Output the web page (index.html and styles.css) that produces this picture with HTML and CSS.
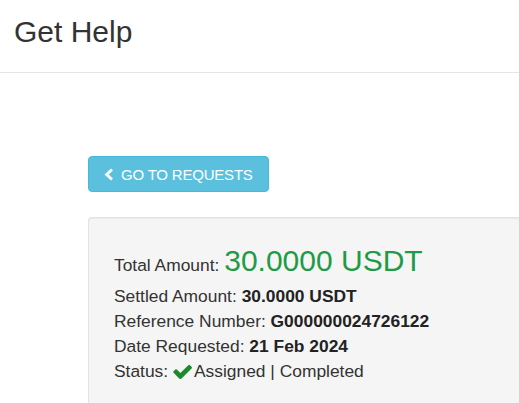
FILE: index.html
```html
<!DOCTYPE html>
<html lang="en">
<head>
<meta charset="utf-8">
<title>Get Help</title>
<link rel="stylesheet" href="styles.css">
</head>
<body>
<header class="page-header">
  <h1 class="page-title">Get Help</h1>
</header>
<main class="content">
  <a class="btn-back" href="#">
    <svg class="chevron" width="10" height="13" viewBox="0 0 10 13"><polyline points="8,1.5 2.6,6.5 8,11.5" fill="none" stroke="#fff" stroke-width="2.9" stroke-linecap="butt" stroke-linejoin="miter"/></svg>
    <span>GO TO REQUESTS</span>
  </a>
  <section class="well">
    <div class="row row-total">Total Amount: <span class="total-value">30.0000 USDT</span></div>
    <div class="row">Settled Amount: <b>30.0000 USDT</b></div>
    <div class="row">Reference Number: <b>G000000024726122</b></div>
    <div class="row">Date Requested: <b>21 Feb 2024</b></div>
    <div class="row">Status: <svg class="check" width="19" height="15" viewBox="100 330 1580 1110"><path fill="#1c8a2c" d="M1671 566q0 40-28 68l-724 724-136 136q-28 28-68 28t-68-28l-136-136-362-362q-28-28-28-68t28-68l136-136q28-28 68-28t68 28l294 295 656-657q28-28 68-28t68 28l136 136q28 28 28 68z"/></svg>Assigned | Completed</div>
  </section>
</main>
</body>
</html>
```
FILE: styles.css
```css
html, body {
  margin: 0;
  padding: 0;
  overflow: hidden;
  background: #fff;
}
body {
  font-family: "Liberation Sans", Arial, sans-serif;
  color: #333;
  width: 519px;
  height: 403px;
}
.page-header {
  height: 72px;
  border-bottom: 1px solid #e5e5e5;
  box-sizing: content-box;
}
.page-title {
  margin: 0;
  padding: 15px 0 0 14px;
  font-size: 30px;
  line-height: 33px;
  font-weight: normal;
  color: #333;
}
.content {
  padding: 83px 0 0 88px;
}
.btn-back {
  display: inline-flex;
  align-items: center;
  gap: 7px;
  height: 36px;
  box-sizing: border-box;
  width: 181px;
  padding: 0 0 0 15px;
  background: #5bc0de;
  border: 1px solid #46b8da;
  border-radius: 4px;
  color: #fff;
  text-decoration: none;
  font-size: 15px;
  letter-spacing: -0.2px;
}
.chevron {
  display: block;
  flex: none;
}
.well {
  width: 431px;
  margin-top: 25px;
  background: #f5f5f5;
  border: 1px solid #e3e3e3;
  border-right: 0;
  border-radius: 4px 0 0 4px;
  box-shadow: inset 0 1px 1px rgba(0,0,0,.05);
  padding: 30px 0 20px 25px;
  box-sizing: border-box;
}
.row {
  font-size: 17.4px;
  line-height: 25px;
  white-space: nowrap;
}
.row-total {
  margin-bottom: 6px;
}
.total-value {
  font-size: 30px;
  color: #1f9b47;
}
.row b {
  font-weight: bold;
  color: #222;
}
.check {
  vertical-align: -2px;
  margin-right: 2px;
}
```
